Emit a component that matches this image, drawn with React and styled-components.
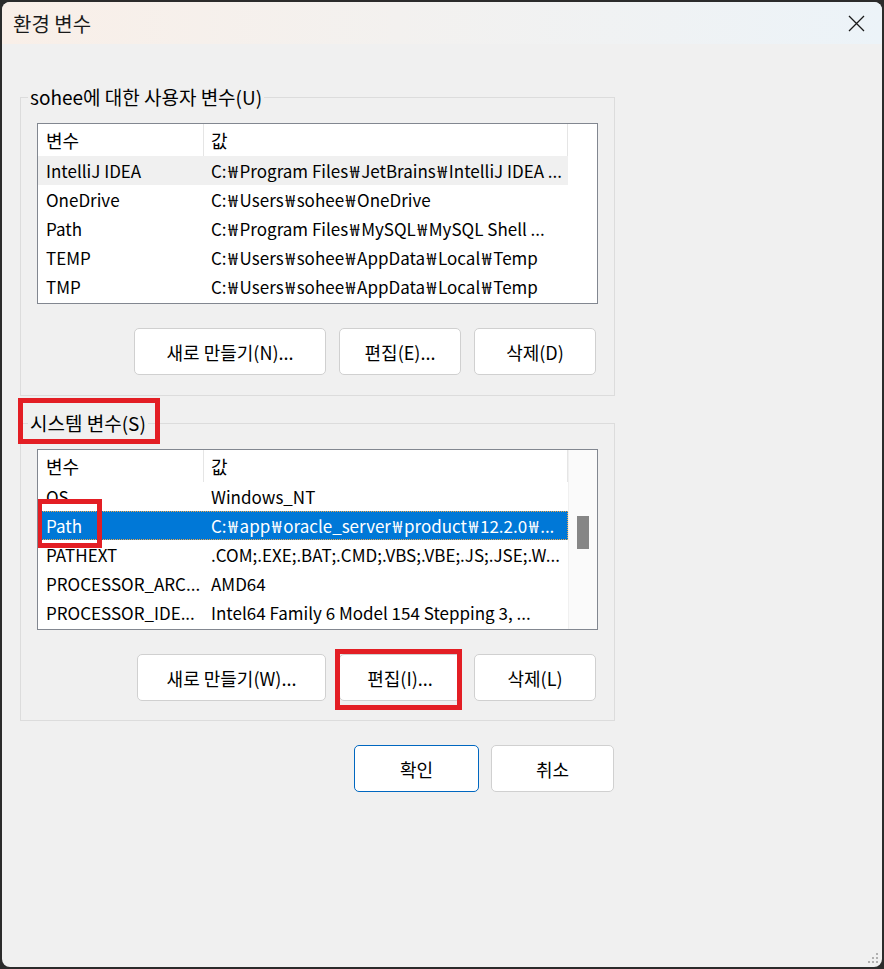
import styled, { createGlobalStyle } from 'styled-components';

const GlobalStyle = createGlobalStyle`
  html, body {
    margin: 0;
    padding: 0;
    background: #2b2b2b;
  }
  body {
    font-family: 'Noto Sans CJK KR', 'Noto Sans', sans-serif;
    color: #000;
  }
  * {
    box-sizing: border-box;
  }
`;

const Window = styled.div`
  position: relative;
  margin: 2px;
  width: 880px;
  height: 965px;
  background: #f0f0f0;
  border-radius: 8px;
  overflow: hidden;
  display: flex;
  flex-direction: column;
`;

const TitleBar = styled.div`
  height: 42px;
  flex: none;
  display: flex;
  align-items: center;
  justify-content: space-between;
  padding: 0 17px 0 11px;
  background: linear-gradient(90deg, #f9efe8 0%, #f3f1ef 45%, #ecf3f8 100%);
  font-size: 20px;
  color: #1a1a1a;
`;

const Content = styled.div`
  padding: 41px 0 0 18px;
  display: flex;
  flex-direction: column;
  width: 613px;
`;

const Group = styled.fieldset`
  margin: 0;
  padding: 0;
  min-width: 0;
  width: 595px;
  border: 1px solid #dcdcdc;

  & + & {
    margin-top: 15px;
  }
`;

const Legend = styled.legend`
  position: relative;
  margin-left: 7px;
  padding: 0 2px;
  font-size: 19px;
  line-height: 24px;
`;

const GroupBody = styled.div`
  padding: 14px 16px 0;
`;

const ListBox = styled.div`
  height: 181px;
  border: 1px solid #828790;
  background: #fff;
  display: flex;
  overflow: hidden;
`;

const Table = styled.div`
  width: 530px;
  flex: none;
`;

const Header = styled.div`
  display: grid;
  grid-template-columns: 166px 364px;
  height: 32px;
`;

const HeaderCell = styled.div`
  display: flex;
  align-items: center;
  padding-left: ${(p) => (p.$first ? 8 : 7)}px;
  border-right: 1px solid #e5e5e5;
  font-size: 18px;
`;

const Row = styled.div`
  display: grid;
  grid-template-columns: 166px 364px;
  height: 29px;
  font-size: 17px;
  background: ${(p) => (p.$selected ? '#0078d7' : p.$hover ? '#f0f0f0' : 'transparent')};
  color: ${(p) => (p.$selected ? '#fff' : '#000')};
  outline: ${(p) => (p.$selected ? '1px dotted #f2a64a' : 'none')};
  outline-offset: -1px;
`;

const Cell = styled.div`
  position: relative;
  display: flex;
  align-items: center;
  padding-left: ${(p) => (p.$first ? 8 : 7)}px;
  white-space: nowrap;
  overflow: ${(p) => (p.$marked ? 'visible' : 'hidden')};
`;

const Won = styled.span`
  display: inline-block;
  width: 13px;
  text-align: center;
`;

const ScrollTrack = styled.div`
  flex: 1;
  background: #fafafa;
  border-left: 1px solid #f0f0f0;
`;

const Thumb = styled.div`
  margin: 66px 0 0 8px;
  width: 12px;
  height: 33px;
  background: #868686;
`;

const ButtonRow = styled.div`
  display: flex;
  justify-content: flex-end;
  gap: ${(p) => p.$gap || 13}px;
  margin: ${(p) => p.$margin};
`;

const Button = styled.button`
  position: relative;
  width: ${(p) => p.$w}px;
  height: 47px;
  background: #fff;
  border: 1px solid ${(p) => (p.$primary ? '#0067c0' : '#d0d0d0')};
  border-radius: 5px;
  font-family: inherit;
  font-size: 18px;
  color: #000;
  padding: 0;
`;

const Mark = styled.span`
  position: absolute;
  left: ${(p) => p.$x}px;
  top: ${(p) => p.$y}px;
  width: ${(p) => p.$w}px;
  height: ${(p) => p.$h}px;
  border: 5px solid #e31e24;
  pointer-events: none;
`;

const Grip = styled.svg`
  position: absolute;
  right: 3px;
  bottom: 3px;
`;

const userVars = [
  ['IntelliJ IDEA', 'C:₩Program Files₩JetBrains₩IntelliJ IDEA ...'],
  ['OneDrive', 'C:₩Users₩sohee₩OneDrive'],
  ['Path', 'C:₩Program Files₩MySQL₩MySQL Shell ...'],
  ['TEMP', 'C:₩Users₩sohee₩AppData₩Local₩Temp'],
  ['TMP', 'C:₩Users₩sohee₩AppData₩Local₩Temp'],
];

const systemVars = [
  ['OS', 'Windows_NT'],
  ['Path', 'C:₩app₩oracle_server₩product₩12.2.0₩...'],
  ['PATHEXT', '.COM;.EXE;.BAT;.CMD;.VBS;.VBE;.JS;.JSE;.W...'],
  ['PROCESSOR_ARC...', 'AMD64'],
  ['PROCESSOR_IDE...', 'Intel64 Family 6 Model 154 Stepping 3, ...'],
];

// windows shows the backslash as a wide won sign
const withWon = (text) =>
  text.split('₩').flatMap((part, i) => (i === 0 ? [part] : [<Won key={i}>₩</Won>, part]));

const VarList = ({ rows, hoverIndex, selectedIndex, scroll }) => (
  <ListBox>
    <Table>
      <Header>
        <HeaderCell $first>변수</HeaderCell>
        <HeaderCell>값</HeaderCell>
      </Header>
      {rows.map(([name, value], i) => (
        <Row key={name} $hover={i === hoverIndex} $selected={i === selectedIndex}>
          <Cell $first $marked={i === selectedIndex}>
            {name}
            {i === selectedIndex && <Mark $x={-1} $y={-12} $w={65} $h={49} />}
          </Cell>
          <Cell>{withWon(value)}</Cell>
        </Row>
      ))}
    </Table>
    {scroll ? (
      <ScrollTrack>
        <Thumb />
      </ScrollTrack>
    ) : null}
  </ListBox>
);

const App = () => (
  <>
    <GlobalStyle />
    <Window>
      <TitleBar>
        <span>환경 변수</span>
        <svg width="17" height="17" viewBox="0 0 17 17">
          <path d="M1 1 L16 16 M16 1 L1 16" stroke="#1a1a1a" strokeWidth="1.3" fill="none" />
        </svg>
      </TitleBar>

      <Content>
        <Group>
          <Legend>sohee에 대한 사용자 변수(U)</Legend>
          <GroupBody>
            <VarList rows={userVars} hoverIndex={0} />
            <ButtonRow $margin="24px 2px 20px 0">
              <Button $w={192}>새로 만들기(N)...</Button>
              <Button $w={122}>편집(E)...</Button>
              <Button $w={122}>삭제(D)</Button>
            </ButtonRow>
          </GroupBody>
        </Group>

        <Group>
          <Legend>
            시스템 변수(S)
            <Mark $x={-10} $y={-13} $w={142} $h={46} />
          </Legend>
          <GroupBody>
            <VarList rows={systemVars} selectedIndex={1} scroll />
            <ButtonRow $margin="24px 2px 19px 0">
              <Button $w={189}>새로 만들기(W)...</Button>
              <Button $w={122}>
                편집(I)...
                <Mark $x={-5} $y={-6} $w={127} $h={61} />
              </Button>
              <Button $w={122}>삭제(L)</Button>
            </ButtonRow>
          </GroupBody>
        </Group>

        <ButtonRow $gap={12} $margin="24px 1px 0 0">
          <Button $w={125} $primary>
            확인
          </Button>
          <Button $w={123}>취소</Button>
        </ButtonRow>
      </Content>

      <Grip width="12" height="12" viewBox="0 0 12 12">
        <g fill="#b0b0b0">
          <rect x="9" y="1" width="2" height="2" />
          <rect x="5" y="5" width="2" height="2" />
          <rect x="9" y="5" width="2" height="2" />
          <rect x="1" y="9" width="2" height="2" />
          <rect x="5" y="9" width="2" height="2" />
          <rect x="9" y="9" width="2" height="2" />
        </g>
      </Grip>
    </Window>
  </>
);

export default App;
